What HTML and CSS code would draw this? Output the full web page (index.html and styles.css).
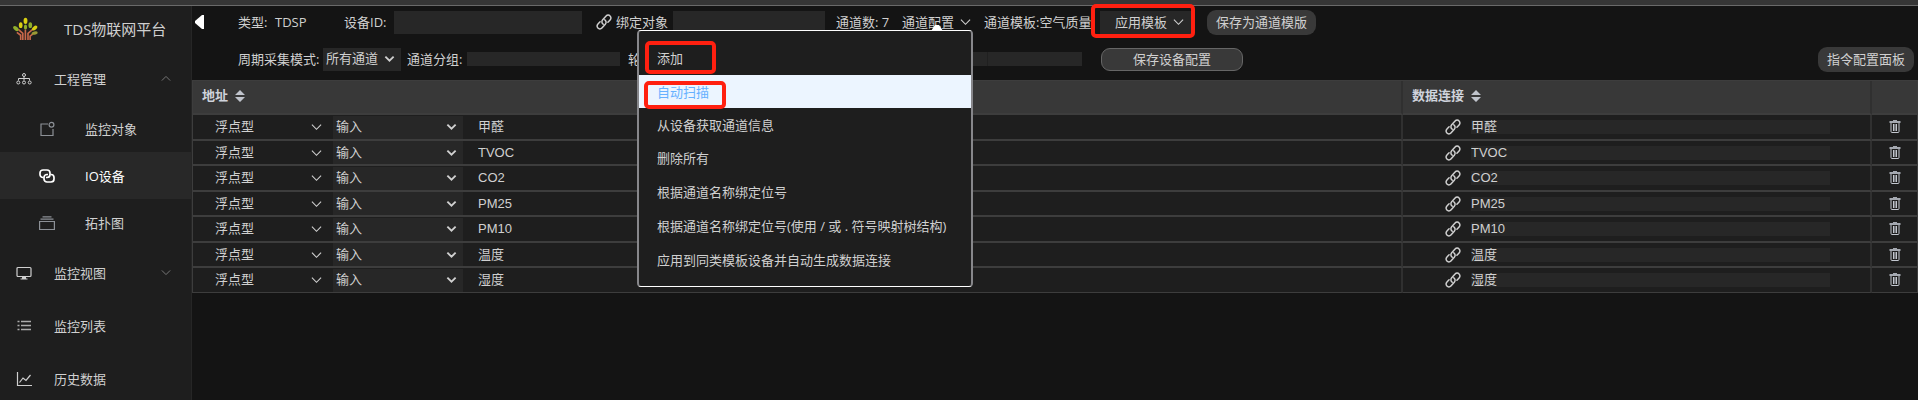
FILE: index.html
```html
<!DOCTYPE html>
<html lang="zh-CN">
<head>
<meta charset="utf-8">
<title>TDS物联网平台</title>
<link rel="stylesheet" href="styles.css">
</head>
<body>
<svg class="sprite" aria-hidden="true">
  <symbol id="thin-down" viewBox="0 0 12 8"><path d="M1 1.5 6 6.5 11 1.5" fill="none" stroke="currentColor" stroke-width="1.2"/></symbol>
  <symbol id="thick-down" viewBox="0 0 12 8"><path d="M1.5 1.5 6 5.8 10.5 1.5" fill="none" stroke="currentColor" stroke-width="2"/></symbol>
  <symbol id="link" viewBox="0 0 16 16"><g fill="none" stroke="currentColor" stroke-width="1.5" stroke-linecap="round"><path d="M7.200 10.200a3 3 0 0 1-.5-4.500l3.400-3.700a2.700 2.700 0 0 1 4 0 2.700 2.700 0 0 1 0 3.900L11.900 8.300"/><path d="M8.800 5.800a3 3 0 0 1 .5 4.500l-3.400 3.700a2.700 2.700 0 0 1-4 0 2.700 2.700 0 0 1 0-3.900l2.200-2.400"/></g></symbol>
  <symbol id="trash" viewBox="0 0 12 14"><path d="M4 0h4v1H4zM.5 1h11v2H.5z" fill="#a4a8b0"/><path d="M2 3v8.500q0 1 1 1h6q1 0 1-1V3M4.500 4v7M6 4v7M7.500 4v7" fill="none" stroke="#c3c7cf" stroke-width="1"/></symbol>
  <symbol id="sort" viewBox="0 0 10 12"><path d="M0 5 5 0l5 5zM0 7h10l-5 5z" fill="#c0c4cc"/></symbol>
</svg>
<div class="topline"></div>
<div class="layout">
  <aside class="sidebar">
    <div class="brand">
      <svg class="logo" viewBox="0 0 26 24" aria-hidden="true">
        <g fill="none" stroke="#c8684a" stroke-width="1.700"><path d="M10.200 23.500V16.500L5.500 12.500M12.900 23.500V12.500M15.600 23.500V16.500L20.500 12.500M8 23.500V18.500L4 15.500M17.800 23.500V19.500l3-2.500"/></g>
        <g fill="#d8cf12"><ellipse cx="13" cy="3.500" rx="2" ry="3.300"/><ellipse cx="8" cy="8" rx="1.900" ry="3"/><ellipse cx="22.500" cy="11" rx="1.900" ry="3.200" transform="rotate(50 22.500 11)"/></g>
        <g fill="#8fae2b"><ellipse cx="18" cy="8" rx="1.900" ry="3"/><ellipse cx="3" cy="11.500" rx="1.900" ry="3.300" transform="rotate(-50 3 11.500)"/><ellipse cx="13" cy="10" rx="1.700" ry="2.600"/></g>
        <ellipse cx="22.500" cy="16.200" rx="3.200" ry="1.700" fill="#9a9a34" transform="rotate(-12 22.500 16.200)"/>
      </svg>
      <span>TDS物联网平台</span>
    </div>
    <nav>
      <a class="item" href="#project"><svg class="icon" viewBox="0 0 16 16"><g fill="none" stroke="currentColor"><circle cx="8" cy="4" r="1.500"/><path d="M8 5.500v4M2.500 9.500V7.500h11v2"/><circle cx="2.300" cy="11.500" r="1.500"/><circle cx="8" cy="11.500" r="1.500"/><circle cx="13.700" cy="11.500" r="1.500"/></g></svg><span>工程管理</span><svg class="fold up" viewBox="0 0 12 8"><use href="#thin-down"/></svg></a>
      <a class="item sub" href="#objects"><svg class="icon dim" viewBox="0 0 16 16"><path d="M9 3H2v11.500h12V8" fill="none" stroke="currentColor" stroke-width="1.200"/><circle cx="12.500" cy="3.800" r="2.400" fill="none" stroke="currentColor" stroke-width="1.200"/></svg><span>监控对象</span></a>
      <a class="item sub active" href="#io" aria-current="page"><svg class="icon" viewBox="0 0 16 16"><g fill="none" stroke="currentColor" stroke-width="1.700"><path d="M4.500 9.500H4a3 3 0 0 1-3-3V5a3 3 0 0 1 3-3h4a3 3 0 0 1 3 3v1.500a3 3 0 0 1-3 3H7"/><path d="M11.500 6.500h.5a3 3 0 0 1 3 3V11a3 3 0 0 1-3 3H8a3 3 0 0 1-3-3V9.500a3 3 0 0 1 3-3h1"/></g></svg><span>IO设备</span></a>
      <a class="item sub" href="#topology"><svg class="icon dim" viewBox="0 0 16 16"><path d="M.600 6.500h14.800v8H.600zM1.500 4.200h13M3.500 1.800h9" fill="none" stroke="currentColor" stroke-width="1.200"/></svg><span>拓扑图</span></a>
      <a class="item" href="#views"><svg class="icon" viewBox="0 0 16 16"><rect x="1" y="2.500" width="14" height="9" rx="1" fill="none" stroke="currentColor" stroke-width="1.200"/><path d="M6 12h4v1.500h1.500v1h-7v-1H6z" fill="currentColor"/></svg><span>监控视图</span><svg class="fold" viewBox="0 0 12 8"><use href="#thin-down"/></svg></a>
      <a class="item" href="#list"><svg class="icon" viewBox="0 0 16 16"><path d="M5 3.500h10M5 7.500h10M5 11.500h10M1.500 3.500h2M1.500 7.500h2M1.500 11.500h2" stroke="currentColor" stroke-width="1.300" opacity=".8"/></svg><span>监控列表</span></a>
      <a class="item" href="#history"><svg class="icon" viewBox="0 0 16 16"><path d="M1.500 1v13.500H16M3.500 11.500 7 7l3 2.500 4.500-5.500" fill="none" stroke="currentColor" stroke-width="1.200"/></svg><span>历史数据</span></a>
    </nav>
  </aside>
  <main class="main">
    <form class="tools">
      <div class="row">
        <button class="collapse" type="button" aria-label="收起"><svg viewBox="0 0 9 14"><path d="M9 0v14H7L0 8V6l7-6z" fill="#fff"/></svg></button>
        <span class="type">类型:</span><span class="type-value">TDSP</span>
        <label class="id-label" for="dev-id">设备ID:</label><input class="box id" id="dev-id">
        <svg class="link bind-icon" viewBox="0 0 16 16"><use href="#link"/></svg>
        <label class="bind-label" for="bind">绑定对象</label><input class="box bind" id="bind">
        <span class="count">通道数: 7</span>
        <div class="dropdown">
          <button class="plain" type="button" aria-expanded="true">通道配置<svg class="chev" viewBox="0 0 12 8"><use href="#thin-down"/></svg></button>
          <div class="menu">
            <svg class="arrow" viewBox="0 0 12 6"><path d="M0 6 4 0h4l4 6z" fill="#fff"/></svg>
            <button type="button">添加</button>
            <button class="hover" type="button">自动扫描</button>
            <button type="button">从设备获取通道信息</button>
            <button type="button">删除所有</button>
            <button type="button">根据通道名称绑定位号</button>
            <button type="button">根据通道名称绑定位号(使用 / 或 . 符号映射树结构)</button>
            <button type="button">应用到同类模板设备并自动生成数据连接</button>
            <i class="mark mark-add"></i><i class="mark mark-scan"></i>
          </div>
        </div>
        <span class="template">通道模板:空气质量</span>
        <div class="apply"><button class="box" type="button">应用模板<svg class="chev" viewBox="0 0 12 8"><use href="#thin-down"/></svg></button><i class="mark mark-apply"></i></div>
        <button class="pill" type="button">保存为通道模版</button>
      </div>
      <div class="row second">
        <label class="mode-label" for="mode">周期采集模式:</label>
        <span class="pick mode"><select id="mode"><option>所有通道</option></select><svg viewBox="0 0 12 8"><use href="#thick-down"/></svg></span>
        <label class="group-label" for="group">通道分组:</label><input class="box group" id="group">
        <label class="poll-label" for="poll">轮询间隔:</label><input class="box poll" id="poll"><input class="box unit" aria-label="单位">
        <button class="pill save" type="button">保存设备配置</button>
        <button class="pill panel" type="button">指令配置面板</button>
      </div>
    </form>
    <table>
      <colgroup><col><col class="c-data"><col class="c-del"></colgroup>
      <thead><tr><th>地址<svg class="sort" viewBox="0 0 10 12"><use href="#sort"/></svg></th><th>数据连接<svg class="sort" viewBox="0 0 10 12"><use href="#sort"/></svg></th><th></th></tr></thead>
      <tbody></tbody>
    </table>
  </main>
</div>
<template id="channel">
  <tr>
    <td><div class="cell"><span class="pick kind"><select aria-label="数据类型"><option>浮点型</option></select><svg viewBox="0 0 12 8"><use href="#thin-down"/></svg></span><span class="pick io"><select aria-label="输入输出"><option>输入</option></select><svg viewBox="0 0 12 8"><use href="#thick-down"/></svg></span><input class="name" aria-label="通道名称"></div></td>
    <td><div class="cell data"><svg class="link" viewBox="0 0 16 16"><use href="#link"/></svg><input class="box tag" aria-label="数据连接"></div></td>
    <td class="del"><button type="button" aria-label="删除"><svg viewBox="0 0 12 14"><use href="#trash"/></svg></button></td>
  </tr>
</template>
<script src="app.js"></script>
</body>
</html>
```

FILE: styles.css
```css
* { box-sizing: border-box; }
body {
  margin: 0;
  min-height: 100vh;
  display: flex;
  flex-direction: column;
  overflow: hidden;
  background: #141414;
  color: #d0d0d0;
  font: 13px/20px "Open Sans", "Noto Sans CJK SC", sans-serif;
}
button, input, select {
  margin: 0;
  padding: 0;
  border: 0;
  border-radius: 0;
  background: none;
  color: inherit;
  font: inherit;
}
input, select { font-family: "Liberation Sans", "Noto Sans CJK SC", sans-serif; }
svg { display: block; flex: none; }
.sprite { width: 0; height: 0; position: absolute; }

.topline { height: 6px; background: #363636; border-bottom: 1px solid #6a6a6a; }
.layout { flex: 1; display: flex; }

.sidebar { width: 192px; flex: none; background: #1e1e1e; border-right: 1px solid #262626; }
.brand { display: flex; align-items: center; gap: 26px; height: 46px; padding-left: 13px; font-size: 15px; }
.logo { width: 25px; height: 24px; }
.item { display: flex; align-items: center; height: 53px; padding: 0 20px 0 16px; color: inherit; text-decoration: none; }
.icon { width: 16px; height: 16px; margin-right: 22px; }
.sub { height: 47px; padding-left: 39px; }
.sub .icon { margin-right: 30px; }
.dim { color: #8c9096; }
.active { background: #282828; color: #fff; }
.fold { width: 10px; height: 7px; margin-left: auto; color: #777; }
.up { transform: rotate(180deg); }

.main { flex: 1; min-width: 0; }
.row { display: flex; align-items: center; height: 32px; white-space: nowrap; }
.second { height: 42px; padding-left: 46px; }
.box { background: #272727; height: 23px; }
.second .box { height: 14px; }
.collapse { width: 46px; padding-left: 3px; }
.collapse svg { width: 9px; height: 14px; }
.type { width: 37px; }
.type-value { width: 69px; }
.id-label { width: 50px; }
.id { width: 188px; }
.link { width: 16px; height: 16px; }
.bind-icon { margin: 0 4px 0 14px; }
.bind-label { width: 57px; }
.bind { width: 152px; }
.count { width: 66px; margin-left: 11px; }
.dropdown { position: relative; width: 82px; }
.plain { display: flex; align-items: center; gap: 6px; }
.chev { width: 11px; height: 8px; }
.template { width: 116px; }
.apply { position: relative; }
.apply button { display: flex; align-items: center; gap: 6px; padding: 0 8px 0 15px; }
.pill { height: 25px; padding: 0 9px; border-radius: 9px; background: #393939; }
.row > .pill { margin-left: 15px; }

.mode-label { width: 85px; }
.pick { display: grid; align-items: center; height: 23px; background: #272727; }
.pick select, .pick svg { grid-area: 1 / 1; }
.pick select { width: 100%; height: 100%; appearance: none; padding-left: 3px; }
.pick svg { width: 11px; height: 8px; justify-self: end; margin-right: 6px; pointer-events: none; }
.mode { width: 78px; }
.group-label { width: 60px; margin-left: 6px; }
.group { width: 153px; }
.poll-label { width: 65px; margin-left: 8px; }
.poll { width: 295px; border-right: 1px solid #202020; }
.unit { width: 94px; }
.second .save { width: 142px; height: 23px; margin-left: 19px; border: 1px solid #666; }
.second .panel { margin-left: auto; margin-right: 4px; }

.menu {
  position: absolute;
  z-index: 2;
  top: 18px;
  left: -265px;
  width: 336px;
  padding: 10px 0 9px;
  background: #1e1e1e;
  border: solid #87878b;
  border-width: 1px 2px;
  border-top-color: #fff;
  border-bottom-color: #fff;
  border-radius: 4px;
}
.menu button { display: block; width: 100%; height: 34px; padding-left: 18px; text-align: left; }
.menu .hover, .menu .hover + button { height: 33px; }
.menu .hover { background: #ecf5ff; color: #66b1ff; }
.arrow { position: absolute; top: -6px; left: 292px; width: 12px; height: 6px; }
.mark { position: absolute; border: 4px solid #ff2010; border-radius: 5px; pointer-events: none; }
.mark-add { left: 6px; top: 10px; width: 71px; height: 33px; }
.mark-scan { left: 5px; top: 50px; width: 82px; height: 28px; }
.mark-apply { left: -9px; top: -7px; width: 104px; height: 34px; }

table { width: 100%; table-layout: fixed; border-collapse: separate; border-spacing: 0; border: 1px solid #3d3d3d; border-width: 1px 1px 0; }
.c-data { width: 469px; }
.c-del { width: 45px; }
th, td { padding: 0; border-bottom: 2px solid #3d3d3d; border-right: 2px solid #303030; }
th:last-child, td:last-child { border-right: 0; }
th { height: 34px; padding: 0 0 4px 9px; background: #383838; text-align: left; line-height: 20px; color: #cfd3dc; }
.sort { display: inline-block; width: 10px; height: 12px; margin-left: 7px; vertical-align: -2px; }
tbody tr { height: 25px; background: #1e1e1e; }
tbody tr:nth-child(odd):not(:last-child) { height: 26px; }
tbody tr:last-child td { border-bottom-width: 1px; }
.cell { display: flex; align-items: center; height: 23px; }
.kind { width: 140px; background: none; }
.kind select { padding-left: 22px; }
.kind svg { margin-right: 11px; }
.io { width: 130px; }
.name { flex: 1; margin-left: 15px; }
.data { padding: 0 40px 0 42px; gap: 10px; }
.tag { flex: 1; height: 14px; line-height: 14px; }
.del button { display: block; margin: 0 auto; }
.del svg { width: 12px; height: 14px; }
```

FILE: app.js
```js
const names = ["甲醛", "TVOC", "CO2", "PM25", "PM10", "温度", "湿度"];
const body = document.querySelector("tbody");
const template = document.getElementById("channel");
for (const name of names) {
  const row = template.content.cloneNode(true);
  row.querySelector(".name").value = name;
  row.querySelector(".tag").value = name;
  body.append(row);
}
```
